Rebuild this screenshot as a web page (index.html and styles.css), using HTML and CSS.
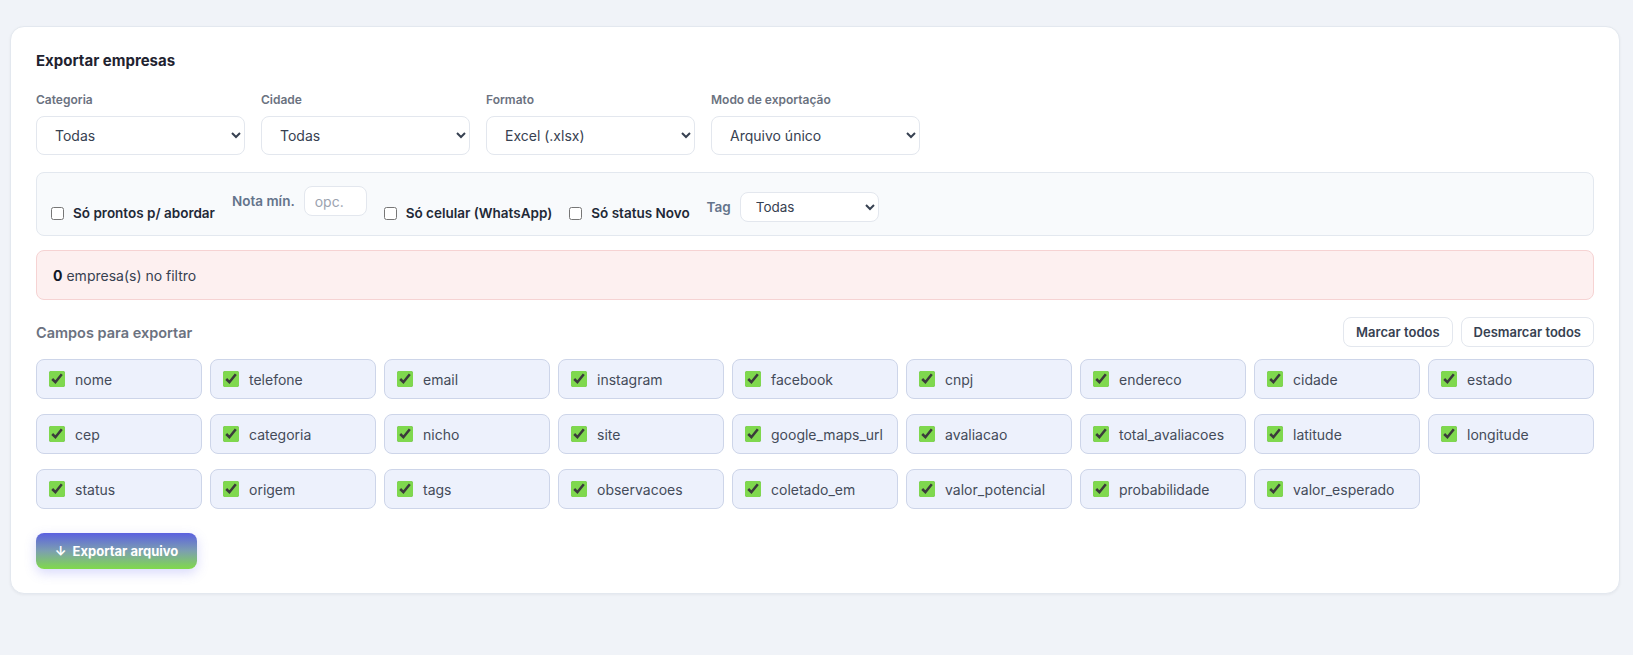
FILE: index.html
```html
<!DOCTYPE html>
<html lang="pt-BR">
<head>
<meta charset="UTF-8" />
<meta name="viewport" content="width=device-width, initial-scale=1" />
<title>Exportar empresas</title>
<link rel="stylesheet" href="styles.css">
</head>
<body>
<div class="page">
  <section class="card">
    <h2>Exportar empresas</h2>

    <!-- Main selects -->
    <div class="fields">
      <div class="field">
        <label>Categoria</label>
        <select><option>Todas</option></select>
      </div>
      <div class="field">
        <label>Cidade</label>
        <select><option>Todas</option></select>
      </div>
      <div class="field">
        <label>Formato</label>
        <select><option>Excel (.xlsx)</option></select>
      </div>
      <div class="field">
        <label>Modo de exportação</label>
        <select><option>Arquivo único</option></select>
      </div>
    </div>

    <!-- Extra filters -->
    <div class="filters">
      <label class="check"><input type="checkbox" /> Só prontos p/ abordar</label>
      <label class="inline nota">Nota mín. <input type="text" placeholder="opc." /></label>
      <label class="check"><input type="checkbox" /> Só celular (WhatsApp)</label>
      <label class="check"><input type="checkbox" /> Só status Novo</label>
      <label class="inline">Tag <select class="small"><option>Todas</option></select></label>
    </div>

    <div class="count"><b>0</b> empresa(s) no filtro</div>

    <div class="campos-head">
      <span>Campos para exportar</span>
      <div class="actions">
        <button class="btn">Marcar todos</button>
        <button class="btn">Desmarcar todos</button>
      </div>
    </div>

    <div class="campos">
      <label class="chip"><input type="checkbox" checked /> nome</label>
      <label class="chip"><input type="checkbox" checked /> telefone</label>
      <label class="chip"><input type="checkbox" checked /> email</label>
      <label class="chip"><input type="checkbox" checked /> instagram</label>
      <label class="chip"><input type="checkbox" checked /> facebook</label>
      <label class="chip"><input type="checkbox" checked /> cnpj</label>
      <label class="chip"><input type="checkbox" checked /> endereco</label>
      <label class="chip"><input type="checkbox" checked /> cidade</label>
      <label class="chip"><input type="checkbox" checked /> estado</label>
      <label class="chip"><input type="checkbox" checked /> cep</label>
      <label class="chip"><input type="checkbox" checked /> categoria</label>
      <label class="chip"><input type="checkbox" checked /> nicho</label>
      <label class="chip"><input type="checkbox" checked /> site</label>
      <label class="chip"><input type="checkbox" checked /> google_maps_url</label>
      <label class="chip"><input type="checkbox" checked /> avaliacao</label>
      <label class="chip"><input type="checkbox" checked /> total_avaliacoes</label>
      <label class="chip"><input type="checkbox" checked /> latitude</label>
      <label class="chip"><input type="checkbox" checked /> longitude</label>
      <label class="chip"><input type="checkbox" checked /> status</label>
      <label class="chip"><input type="checkbox" checked /> origem</label>
      <label class="chip"><input type="checkbox" checked /> tags</label>
      <label class="chip"><input type="checkbox" checked /> observacoes</label>
      <label class="chip"><input type="checkbox" checked /> coletado_em</label>
      <label class="chip"><input type="checkbox" checked /> valor_potencial</label>
      <label class="chip"><input type="checkbox" checked /> probabilidade</label>
      <label class="chip"><input type="checkbox" checked /> valor_esperado</label>
    </div>

    <button class="export">↓&nbsp; Exportar arquivo</button>
  </section>
</div>
</body>
</html>
```

FILE: styles.css
```css
body {
  margin: 0;
  font-family: Inter, 'Noto Sans', sans-serif;
  background: #f0f3f8;
  color: #1f2330;
}

.page {
  padding: 26px 13px 40px 10px;
}

/* Card */
.card {
  background: #fff;
  border: 1px solid #e3e8ef;
  border-radius: 14px;
  box-shadow: 0 1px 3px rgba(15, 23, 42, 0.05);
  padding: 25px 25px 24px 25px;
}
.card h2 {
  font-size: 15px;
  font-weight: 700;
  line-height: 18px;
  margin: 0 0 22px 0;
  color: #1f2330;
}

/* Top selects */
.fields {
  display: flex;
  gap: 16px;
}
.field {
  display: flex;
  flex-direction: column;
  width: 209px;
}
.field label {
  font-size: 12px;
  font-weight: 600;
  line-height: 15px;
  color: #6b7280;
  margin-bottom: 9px;
}
select {
  font-family: inherit;
  font-size: 14px;
  color: #374151;
  background: #fff;
  border: 1px solid #e3e7ee;
  border-radius: 8px;
  height: 39px;
  padding: 0 4px 0 14px;
}

/* Extra filters */
.filters {
  margin-top: 17px;
  background: #f8fafc;
  border: 1px solid #e3e8ef;
  border-radius: 8px;
  height: 64px;
  box-sizing: border-box;
  padding: 0 14px 13px 14px;
  display: flex;
  align-items: flex-end;
  gap: 17px;
}
.check {
  display: flex;
  align-items: center;
  gap: 9px;
  font-size: 13.5px;
  font-weight: 600;
  color: #1f2937;
  line-height: 18px;
}
.check input {
  margin: 0;
  width: 13px;
  height: 13px;
}
.inline {
  display: flex;
  align-items: center;
  gap: 9px;
  font-size: 13.5px;
  font-weight: 600;
  color: #64748b;
}
.nota {
  margin-bottom: 6px;
}
.nota input {
  font-family: inherit;
  font-size: 14px;
  width: 63px;
  height: 30px;
  box-sizing: border-box;
  border: 1px solid #e3e7ee;
  border-radius: 8px;
  padding: 0 10px;
  background: #fff;
}
.nota input::placeholder {
  color: #9ca3af;
}
select.small {
  width: 139px;
  height: 30px;
  padding: 0 4px 0 11px;
  font-size: 13.5px;
}

/* Count box */
.count {
  margin-top: 14px;
  background: #fdf0f0;
  border: 1px solid #f6d3d3;
  border-radius: 8px;
  height: 50px;
  box-sizing: border-box;
  padding: 0 16px;
  display: flex;
  align-items: center;
  font-size: 14px;
  color: #374151;
}
.count b {
  color: #111827;
  margin-right: 4px;
}

/* Campos */
.campos-head {
  margin-top: 17px;
  display: flex;
  justify-content: space-between;
  align-items: center;
}
.campos-head span {
  font-size: 14.5px;
  font-weight: 600;
  color: #6b7280;
}
.actions {
  display: flex;
  gap: 8px;
}
.btn {
  font-family: inherit;
  font-size: 13px;
  font-weight: 600;
  color: #374151;
  background: #fff;
  border: 1px solid #e3e7ee;
  border-radius: 8px;
  height: 30px;
  padding: 0 12px;
}

.campos {
  margin-top: 12px;
  display: grid;
  grid-template-columns: repeat(9, 1fr);
  gap: 15px 8px;
}
.chip {
  height: 40px;
  box-sizing: border-box;
  background: #edf1fc;
  border: 1px solid #cdd5e9;
  border-radius: 8px;
  display: flex;
  align-items: center;
  gap: 10px;
  padding: 0 12px;
  font-size: 14px;
  color: #444b59;
}
.chip input {
  margin: 0;
  width: 16px;
  height: 16px;
  accent-color: #7fd84e;
}

/* Export button */
.export {
  margin-top: 24px;
  font-family: inherit;
  font-size: 13px;
  font-weight: 700;
  color: #fff;
  border: none;
  border-radius: 8px;
  height: 36px;
  width: 161px;
  background: linear-gradient(180deg, #5b60e0 0%, #7c9fb0 50%, #80da4a 100%);
  box-shadow: 0 4px 12px rgba(99, 102, 241, 0.25);
}
```
